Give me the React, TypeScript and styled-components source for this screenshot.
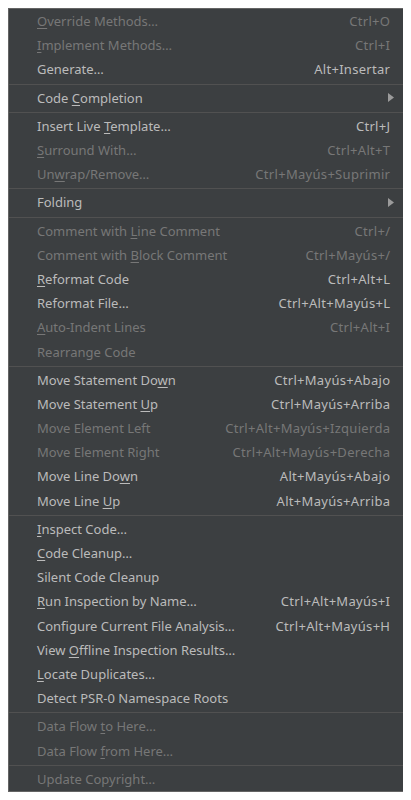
import React from 'react';
import styled, { createGlobalStyle } from 'styled-components';

const GlobalStyle = createGlobalStyle`
    html, body {
        background: #ffffff;
    }
    body {
        margin: 8px;
        font-family: 'Noto Sans', 'Open Sans', sans-serif;
    }
`;

type Entry =
    | { kind: 'item'; label: string; mnemonic?: number; shortcut?: string; disabled?: boolean; submenu?: boolean }
    | { kind: 'sep' };

const item = (label: string, mnemonic: number | undefined, shortcut?: string, disabled = false, submenu = false): Entry => ({
    kind: 'item', label, mnemonic, shortcut, disabled, submenu,
});
const sep: Entry = { kind: 'sep' };

const entries: Entry[] = [
    item('Override Methods…', 0, 'Ctrl+O', true),
    item('Implement Methods…', 0, 'Ctrl+I', true),
    item('Generate…', undefined, 'Alt+Insertar'),
    sep,
    item('Code Completion', 5, undefined, false, true),
    sep,
    item('Insert Live Template…', 12, 'Ctrl+J'),
    item('Surround With…', 0, 'Ctrl+Alt+T', true),
    item('Unwrap/Remove…', 2, 'Ctrl+Mayús+Suprimir', true),
    sep,
    item('Folding', undefined, undefined, false, true),
    sep,
    item('Comment with Line Comment', 13, 'Ctrl+/', true),
    item('Comment with Block Comment', 13, 'Ctrl+Mayús+/', true),
    item('Reformat Code', 0, 'Ctrl+Alt+L'),
    item('Reformat File…', undefined, 'Ctrl+Alt+Mayús+L'),
    item('Auto-Indent Lines', 0, 'Ctrl+Alt+I', true),
    item('Rearrange Code', undefined, undefined, true),
    sep,
    item('Move Statement Down', 17, 'Ctrl+Mayús+Abajo'),
    item('Move Statement Up', 15, 'Ctrl+Mayús+Arriba'),
    item('Move Element Left', undefined, 'Ctrl+Alt+Mayús+Izquierda', true),
    item('Move Element Right', undefined, 'Ctrl+Alt+Mayús+Derecha', true),
    item('Move Line Down', 12, 'Alt+Mayús+Abajo'),
    item('Move Line Up', 10, 'Alt+Mayús+Arriba'),
    sep,
    item('Inspect Code…', 0),
    item('Code Cleanup…', 0),
    item('Silent Code Cleanup', undefined),
    item('Run Inspection by Name…', 0, 'Ctrl+Alt+Mayús+I'),
    item('Configure Current File Analysis…', undefined, 'Ctrl+Alt+Mayús+H'),
    item('View Offline Inspection Results…', 5),
    item('Locate Duplicates…', 0),
    item('Detect PSR-0 Namespace Roots', undefined),
    sep,
    item('Data Flow to Here…', 10, undefined, true),
    item('Data Flow from Here…', 10, undefined, true),
    sep,
    item('Update Copyright…', undefined, undefined, true),
];

const Panel = styled.div`
    width: 394px;
    background: #3c3f41;
    border: 1px solid #646464;
    box-shadow: 0 0 4px 2px rgba(0, 0, 0, 0.12);
    display: flex;
    flex-direction: column;
`;

const Row = styled.div<{ $disabled?: boolean }>`
    height: 24.2px;
    display: flex;
    align-items: center;
    padding: 0 13px 0 28px;
    font-size: 13px;
    color: ${p => (p.$disabled ? '#777777' : '#bbbbbb')};
    white-space: nowrap;
`;

const Label = styled.span`
    flex: 1;
`;

const Mnemonic = styled.span`
    text-decoration: underline;
    text-underline-offset: 2px;
`;

const Shortcut = styled.span`
    margin-left: 24px;
    letter-spacing: 0.3px;
    margin-right: -0.3px;
`;

const Arrow = styled.svg`
    width: 6px;
    height: 9px;
    margin-right: -4px;
    fill: #9b9b9b;
`;

const Separator = styled.div`
    height: 1px;
    margin: 2px 0 1px;
    background: #515151;
`;

const MenuLabel: React.FC<{ text: string; mnemonic?: number }> = ({ text, mnemonic }) => {
    if (mnemonic === undefined) return <Label>{text}</Label>;
    return (
        <Label>
            {text.slice(0, mnemonic)}
            <Mnemonic>{text[mnemonic]}</Mnemonic>
            {text.slice(mnemonic + 1)}
        </Label>
    );
};

export default function App() {
    return (
        <>
            <GlobalStyle />
            <Panel>
                {entries.map((entry, i) => {
                    if (entry.kind === 'sep') return <Separator key={i} />;
                    return (
                        <Row key={i} $disabled={entry.disabled}>
                            <MenuLabel text={entry.label} mnemonic={entry.mnemonic} />
                            {entry.shortcut && <Shortcut>{entry.shortcut}</Shortcut>}
                            {entry.submenu && (
                                <Arrow viewBox="0 0 6 9">
                                    <polygon points="0,0 6,4.5 0,9" />
                                </Arrow>
                            )}
                        </Row>
                    );
                })}
            </Panel>
        </>
    );
}
